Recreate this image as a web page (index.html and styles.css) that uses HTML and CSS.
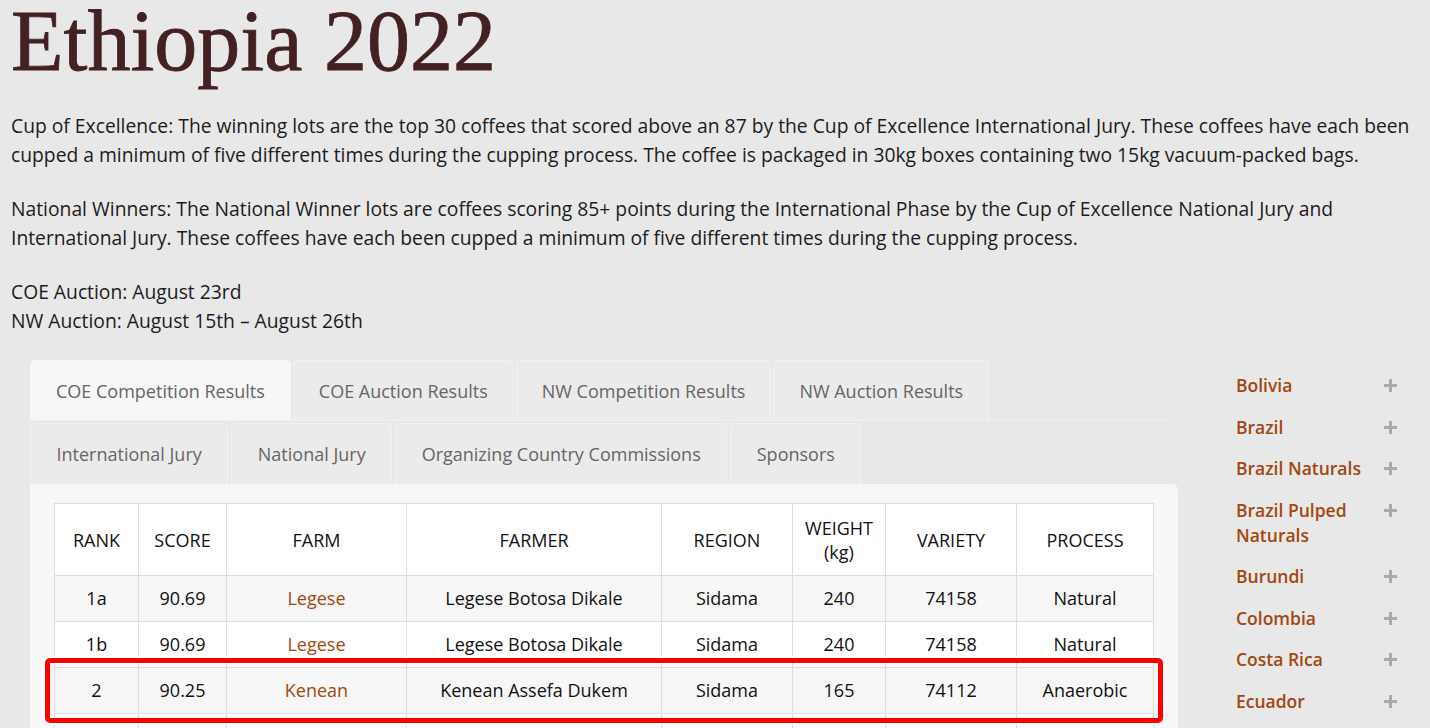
FILE: index.html
```html
<!DOCTYPE html>
<html lang="en">
<head>
<meta charset="utf-8">
<title>Ethiopia 2022</title>
<link rel="stylesheet" href="styles.css">
</head>
<body>
<div class="page">
  <h1 class="title">Ethiopia 2022</h1>
  <p class="intro">Cup of Excellence: The winning lots are the top 30 coffees that scored above an 87 by the Cup of Excellence International Jury. These coffees have each been cupped a minimum of five different times during the cupping process. The coffee is packaged in 30kg boxes containing two 15kg vacuum-packed bags.</p>
  <p class="intro">National Winners: The National Winner lots are coffees scoring 85+ points during the International Phase by the Cup of Excellence National Jury and International Jury. These coffees have each been cupped a minimum of five different times during the cupping process.</p>
  <p class="intro">COE Auction: August 23rd<br>NW Auction: August 15th – August 26th</p>

  <div class="layout">
    <div class="main">
      <div class="tabs">
        <div class="tab-row first">
          <a class="tab active">COE Competition Results</a>
          <a class="tab">COE Auction Results</a>
          <a class="tab">NW Competition Results</a>
          <a class="tab">NW Auction Results</a>
        </div>
        <div class="tab-row second">
          <a class="tab">International Jury</a>
          <a class="tab">National Jury</a>
          <a class="tab">Organizing Country Commissions</a>
          <a class="tab">Sponsors</a>
        </div>
      </div>
      <div class="panel">
        <table class="results">
          <colgroup>
            <col class="c-rank"><col class="c-score"><col class="c-farm"><col class="c-farmer">
            <col class="c-region"><col class="c-weight"><col class="c-variety"><col class="c-process">
          </colgroup>
          <thead>
            <tr><th>RANK</th><th>SCORE</th><th>FARM</th><th>FARMER</th><th>REGION</th><th>WEIGHT<br>(kg)</th><th>VARIETY</th><th>PROCESS</th></tr>
          </thead>
          <tbody>
            <tr><td>1a</td><td>90.69</td><td><a class="link">Legese</a></td><td>Legese Botosa Dikale</td><td>Sidama</td><td>240</td><td>74158</td><td>Natural</td></tr>
            <tr><td>1b</td><td>90.69</td><td><a class="link">Legese</a></td><td>Legese Botosa Dikale</td><td>Sidama</td><td>240</td><td>74158</td><td>Natural</td></tr>
            <tr><td>2</td><td>90.25</td><td><a class="link">Kenean</a></td><td>Kenean Assefa Dukem</td><td>Sidama</td><td>165</td><td>74112</td><td>Anaerobic</td></tr>
            <tr class="spacer"><td></td><td></td><td></td><td></td><td></td><td></td><td></td><td></td></tr>
          </tbody>
        </table>
      </div>
    </div>

    <ul class="countries">
      <li><a class="country">Bolivia</a><span class="plus"></span></li>
      <li><a class="country">Brazil</a><span class="plus"></span></li>
      <li><a class="country">Brazil Naturals</a><span class="plus"></span></li>
      <li><a class="country">Brazil Pulped Naturals</a><span class="plus"></span></li>
      <li><a class="country">Burundi</a><span class="plus"></span></li>
      <li><a class="country">Colombia</a><span class="plus"></span></li>
      <li><a class="country">Costa Rica</a><span class="plus"></span></li>
      <li><a class="country">Ecuador</a><span class="plus"></span></li>
      <li class="more"></li>
    </ul>
  </div>
</div>
<div class="highlight"></div>
</body>
</html>
```

FILE: styles.css
```css
html, body {
  margin: 0;
  padding: 0;
}
body {
  background: #e8e8e8;
  font-family: "Open Sans", "Noto Sans", sans-serif;
  color: #1c1c1c;
  height: 728px;
  overflow: hidden;
  position: relative;
}
.page {
  padding: 0 6px 0 11px;
}
.title {
  font-family: "Liberation Serif", "Times New Roman", serif;
  font-weight: 400;
  font-size: 86px;
  line-height: 82px;
  color: #432021;
  -webkit-text-stroke: 0.8px #432021;
  margin: 0;
}
.intro {
  font-size: 19.3px;
  line-height: 29px;
  margin: 29px 0 0;
}
.intro + .intro {
  margin-top: 25px;
}
.layout {
  display: flex;
  align-items: flex-start;
  margin: 25px 0 0 19px;
  gap: 44px;
}
.main {
  width: 1148px;
  flex: none;
}
.tabs {
  display: flex;
  flex-direction: column;
  gap: 2px;
}
.tab-row {
  display: flex;
  gap: 2px;
}
.tab-row.second {
  gap: 3px;
}
.tab-row.first {
  border-bottom: 1px solid #f0f0f0;
  width: 1142px;
}
.tab {
  display: flex;
  align-items: center;
  padding: 0 25px;
  background: #ebebeb;
  border: 1px solid #f1f1f1;
  border-bottom: none;
  border-radius: 5px 5px 0 0;
  color: #666;
  font-size: 18px;
}
.tab-row.first .tab {
  height: 59px;
}
.tab-row.second .tab {
  height: 60px;
  padding: 0 25.5px;
}
.tab.active {
  background: #f7f7f7;
  border-color: #f7f7f7;
}
.panel {
  background: #f7f7f7;
  border-radius: 0 6px 0 0;
  padding: 19px 25px 0 24px;
}
.results {
  border-collapse: collapse;
  width: 1099px;
  table-layout: fixed;
  background: #fff;
}
.c-rank { width: 84px; }
.c-score { width: 88px; }
.c-farm { width: 180px; }
.c-farmer { width: 255px; }
.c-region { width: 131px; }
.c-weight { width: 93px; }
.c-variety { width: 131px; }
.c-process { width: 137px; }
.results th,
.results td {
  border: 1px solid #ddd;
  text-align: center;
  vertical-align: middle;
  color: #111;
}
.results th {
  font-weight: 400;
  font-size: 18px;
  line-height: 24px;
  padding: 11.5px 2px;
}
.results td {
  font-size: 18px;
  line-height: 25px;
  padding: 10px 4px;
}
.results tbody tr:nth-child(odd) {
  background: #f7f7f7;
}
.results tr.spacer td {
  height: 40px;
  background: #fff;
}
.link {
  color: #a3470f;
  text-decoration: none;
}
.countries {
  list-style: none;
  margin: 4px 0 0;
  padding: 0;
  width: 188px;
  flex: none;
}
.countries li {
  display: flex;
  justify-content: space-between;
  align-items: flex-start;
  padding: 8px 12px 7.5px 13px;
  border: 1px solid #ececec;
  border-top: none;
}
.countries li:first-child {
  border-top: 1px solid #ececec;
}
.countries li.more {
  height: 25px;
}
.country {
  color: #a3470f;
  font-size: 17.5px;
  font-weight: 600;
  line-height: 25px;
  width: 130px;
}
.plus {
  position: relative;
  width: 13px;
  height: 13px;
  margin-top: 6px;
  flex: none;
}
.plus::before,
.plus::after {
  content: "";
  position: absolute;
  background: #aaa;
}
.plus::before {
  left: 0;
  top: 5px;
  width: 13px;
  height: 3px;
}
.plus::after {
  left: 5px;
  top: 0;
  width: 3px;
  height: 13px;
}
.highlight {
  position: absolute;
  left: 45px;
  top: 658px;
  width: 1108px;
  height: 55px;
  border: 5px solid #f00;
  border-radius: 5px;
  box-shadow: 0 0 0 2px #fff;
  pointer-events: none;
}
```
